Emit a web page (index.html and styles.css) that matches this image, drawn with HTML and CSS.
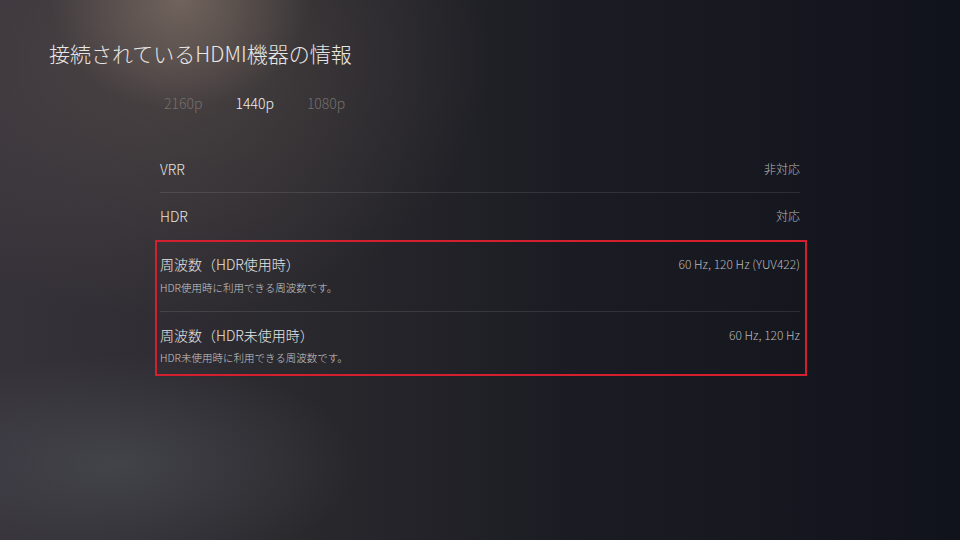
FILE: index.html
```html
<!DOCTYPE html>
<html lang="ja">
<head>
    <meta charset="UTF-8">
    <meta name="viewport" content="width=device-width, initial-scale=1.0">
    <title>接続されているHDMI機器の情報</title>
    <link rel="stylesheet" href="styles.css">
</head>
<body>
    <div class="screen">
        <h1 class="title">接続されているHDMI機器の情報</h1>

        <div class="tabs">
            <span class="tab">2160p</span>
            <span class="tab active">1440p</span>
            <span class="tab">1080p</span>
        </div>

        <div class="list">
            <div class="row">
                <span class="label">VRR</span>
                <span class="value">非対応</span>
            </div>
            <div class="row">
                <span class="label">HDR</span>
                <span class="value">対応</span>
            </div>

            <div class="highlight">
                <div class="row tall">
                    <div class="text">
                        <span class="label">周波数（HDR使用時）</span>
                        <span class="desc">HDR使用時に利用できる周波数です。</span>
                    </div>
                    <span class="value">60 Hz, 120 Hz (YUV422)</span>
                </div>
                <div class="row tall last">
                    <div class="text">
                        <span class="label">周波数（HDR未使用時）</span>
                        <span class="desc">HDR未使用時に利用できる周波数です。</span>
                    </div>
                    <span class="value">60 Hz, 120 Hz</span>
                </div>
            </div>
        </div>
    </div>
</body>
</html>
```

FILE: styles.css
```css
body {
    margin: 0;
    font-family: "Noto Sans CJK JP", "Noto Sans", sans-serif;
    font-weight: 300;
    color: #e4e4e4;
    background: #15161e;
}

.screen {
    width: 960px;
    height: 540px;
    overflow: hidden;
    background:
        radial-gradient(ellipse 130px 110px at 180px 0px, rgba(150, 130, 116, 0.55), rgba(150, 130, 116, 0) 100%),
        radial-gradient(ellipse 320px 260px at 170px 60px, rgba(110, 96, 88, 0.42), rgba(110, 96, 88, 0) 100%),
        radial-gradient(ellipse 240px 110px at 120px 465px, rgba(92, 98, 104, 0.4), rgba(92, 98, 104, 0) 100%),
        linear-gradient(90deg, #36323a 0%, #2a292e 30%, #1b1c23 60%, #11131c 100%);
}

.title {
    margin: 0;
    padding: 38px 0 0 49px;
    font-size: 21px;
    line-height: 30px;
    font-weight: 300;
    color: #e8e6e4;
}

.tabs {
    display: flex;
    gap: 33px;
    margin: 25px 0 0 164px;
    font-size: 14px;
    line-height: 20px;
}

.tab {
    color: #74706e;
}

.tab.active {
    color: #f0f0f0;
}

.list {
    width: 640px;
    margin: 32px 0 0 160px;
}

.row {
    display: flex;
    justify-content: space-between;
    align-items: center;
    padding: 14px 0 13px;
    border-bottom: 1px solid rgba(255, 255, 255, 0.1);
}

.row + .row {
    padding: 13px 0 14px;
    border-bottom: none;
}

.label {
    font-size: 14px;
    line-height: 20px;
    color: #e6e6e6;
}

.value {
    font-size: 12px;
    line-height: 16px;
    color: #b9b9bb;
}

.highlight {
    margin: 0 -7px 0 -5px;
    padding: 0 5px 0 3px;
    border: 2px solid #d4202e;
}

.highlight .row {
    align-items: flex-start;
    padding: 12px 0 15px;
    border-bottom: 1px solid rgba(255, 255, 255, 0.1);
}

.highlight .row.last {
    padding: 13px 0 8px;
    border-bottom: none;
}

.highlight .value {
    margin-top: 2px;
}

.text {
    display: flex;
    flex-direction: column;
    gap: 6px;
}

.row.last .text {
    gap: 5px;
}

.desc {
    font-size: 10.5px;
    line-height: 16px;
    color: #c8c8c8;
}
```
